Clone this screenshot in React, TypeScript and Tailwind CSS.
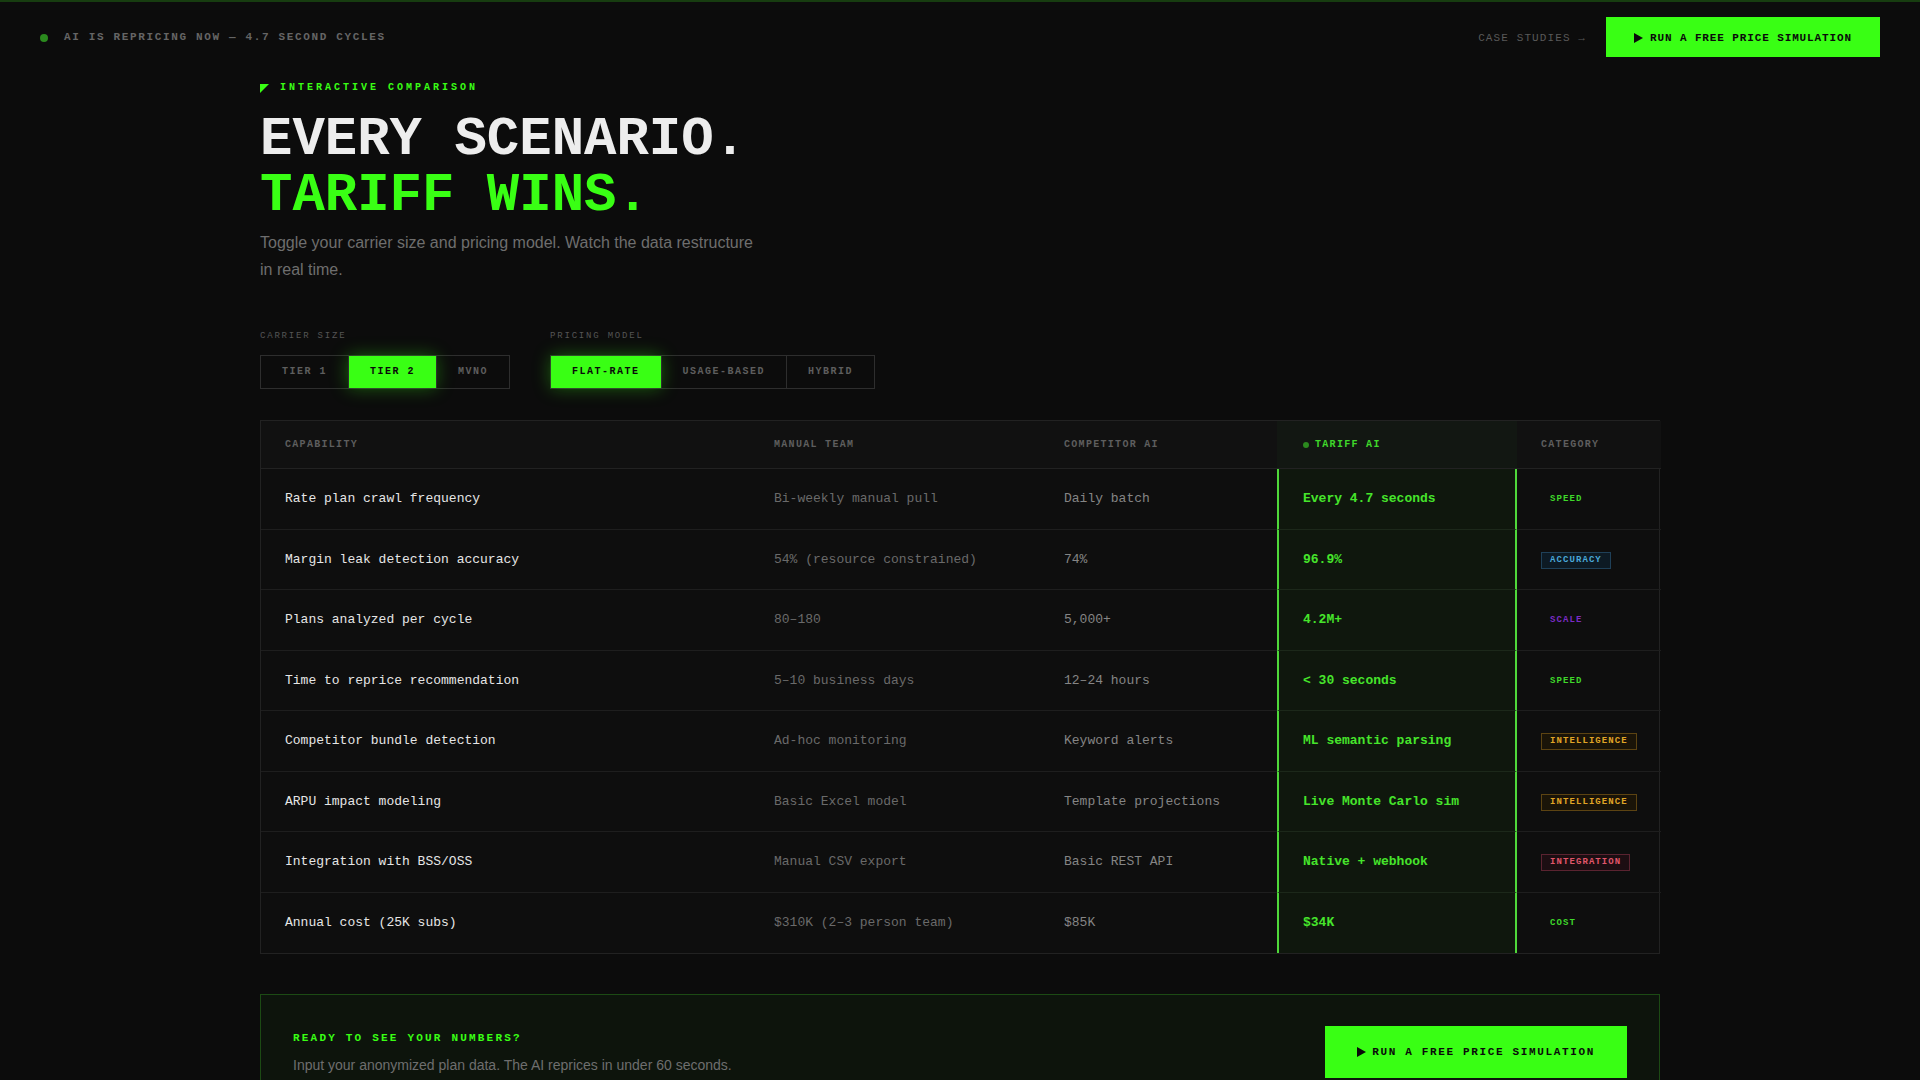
import { useState } from 'react';

type Badge = 'speed' | 'accuracy' | 'scale' | 'intelligence' | 'integration' | 'cost';

const ROWS: { cap: string; manual: string; competitor: string; tariff: string; badge: Badge }[] = [
  { cap: 'Rate plan crawl frequency', manual: 'Bi-weekly manual pull', competitor: 'Daily batch', tariff: 'Every 4.7 seconds', badge: 'speed' },
  { cap: 'Margin leak detection accuracy', manual: '54% (resource constrained)', competitor: '74%', tariff: '96.9%', badge: 'accuracy' },
  { cap: 'Plans analyzed per cycle', manual: '80–180', competitor: '5,000+', tariff: '4.2M+', badge: 'scale' },
  { cap: 'Time to reprice recommendation', manual: '5–10 business days', competitor: '12–24 hours', tariff: '< 30 seconds', badge: 'speed' },
  { cap: 'Competitor bundle detection', manual: 'Ad-hoc monitoring', competitor: 'Keyword alerts', tariff: 'ML semantic parsing', badge: 'intelligence' },
  { cap: 'ARPU impact modeling', manual: 'Basic Excel model', competitor: 'Template projections', tariff: 'Live Monte Carlo sim', badge: 'intelligence' },
  { cap: 'Integration with BSS/OSS', manual: 'Manual CSV export', competitor: 'Basic REST API', tariff: 'Native + webhook', badge: 'integration' },
  { cap: 'Annual cost (25K subs)', manual: '$310K (2–3 person team)', competitor: '$85K', tariff: '$34K', badge: 'cost' },
];

const BADGE_STYLES: Record<Badge, string> = {
  speed: 'text-[#3fd82a] border-transparent',
  accuracy: 'text-[#4aa8d8] border-[#1f4058] bg-[#0d1a24]',
  scale: 'text-[#7a2bc4] border-transparent',
  intelligence: 'text-[#e0a526] border-[#5c4312] bg-[#1a1408]',
  integration: 'text-[#e0566a] border-[#5a2330] bg-[#1c0e12]',
  cost: 'text-[#3fd82a] border-transparent',
};

// play arrow used on the simulation buttons
function Play() {
  return (
    <svg width="9" height="10" viewBox="0 0 9 10" className="shrink-0">
      <polygon points="0,0 9,5 0,10" fill="currentColor" />
    </svg>
  );
}

function Toggle({ label, options, value, onChange }: { label: string; options: string[]; value: string; onChange: (v: string) => void }) {
  return (
    <div>
      <div className="mb-3 text-[9px] leading-[14px] tracking-[0.2em] text-[#555]">{label}</div>
      <div className="flex border border-[#2e2e2e]">
        {options.map((opt, i) => {
          const active = opt === value;
          return (
            <button
              key={opt}
              onClick={() => onChange(opt)}
              className={
                'px-[21px] py-[9px] text-[10px] leading-[14px] font-bold tracking-[0.15em] ' +
                (i > 0 ? 'border-l border-[#2e2e2e] ' : '') +
                (active ? 'bg-[#39ff14] text-[#0a0a0a] shadow-[0_0_18px_rgba(57,255,20,0.35)]' : 'text-[#5e5e5e]')
              }
            >
              {opt}
            </button>
          );
        })}
      </div>
    </div>
  );
}

export default function App() {
  const [tier, setTier] = useState('TIER 2');
  const [model, setModel] = useState('FLAT-RATE');

  return (
    <div className="min-h-screen bg-[#0c0c0c] font-['Liberation_Mono','DejaVu_Sans_Mono',monospace]">
      {/* status bar */}
      <header className="flex h-[58px] items-start justify-between border-t-2 border-[#173d10] px-10 pt-[15px]">
        <div className="flex h-[41px] items-center gap-[16px]">
          <span className="h-[8px] w-[8px] rounded-full bg-[#2b8a1e]" />
          <span className="text-[11px] font-bold tracking-[0.15em] text-[#656565]">AI IS REPRICING NOW — 4.7 SECOND CYCLES</span>
        </div>
        <div className="flex items-center gap-5">
          <span className="mt-[2px] text-[11px] tracking-[0.1em] text-[#595959]">CASE STUDIES →</span>
          <button className="flex h-[40px] items-center gap-[7px] bg-[#39ff14] px-7 pt-[2px] text-[11px] font-bold tracking-[0.08em] text-[#0a0a0a]">
            <Play />
            RUN A FREE PRICE SIMULATION
          </button>
        </div>
      </header>

      <main className="mx-auto w-[1400px]">
        <div className="mt-[23px] flex items-center gap-[11px]">
          <svg width="9" height="9" viewBox="0 0 9 9">
            <polygon points="0,0 9,0 0,9" fill="#39ff14" />
          </svg>
          <span className="text-[10px] leading-[14px] font-bold tracking-[0.3em] text-[#39ff14]">INTERACTIVE COMPARISON</span>
        </div>

        <h1 className="mt-[17px] text-[54px] leading-[56px] font-bold">
          <span className="block text-[#ededed]">EVERY SCENARIO.</span>
          <span className="block text-[#39ff14]">TARIFF WINS.</span>
        </h1>

        <p className="mt-[6px] max-w-[500px] font-['Liberation_Sans',Arial,sans-serif] text-[16px] leading-[26.5px] text-[#6e6e6e]">
          Toggle your carrier size and pricing model. Watch the data restructure in real time.
        </p>

        <div className="mt-[46px] flex gap-10">
          <Toggle label="CARRIER SIZE" options={['TIER 1', 'TIER 2', 'MVNO']} value={tier} onChange={setTier} />
          <Toggle label="PRICING MODEL" options={['FLAT-RATE', 'USAGE-BASED', 'HYBRID']} value={model} onChange={setModel} />
        </div>

        {/* comparison table */}
        <div className="mt-[31px] grid grid-cols-[489px_290px_237px_240px_1fr] border border-[#222] bg-[#0e0e0e]">
          {['CAPABILITY', 'MANUAL TEAM', 'COMPETITOR AI'].map(h => (
            <div key={h} className="flex h-[48px] items-center border-b border-[#222] bg-[#111] px-6 text-[10px] font-bold tracking-[0.13em] text-[#5e5e5e]">
              {h}
            </div>
          ))}
          <div className="flex h-[48px] items-center gap-[6px] border-b border-[#222] bg-[#121712] pl-[26px] text-[10px] font-bold tracking-[0.13em] text-[#3fd82a]">
            <span className="h-[6px] w-[6px] rounded-full bg-[#2b8a1e]" />
            TARIFF AI
          </div>
          <div className="flex h-[48px] items-center border-b border-[#222] bg-[#111] px-6 text-[10px] font-bold tracking-[0.13em] text-[#5e5e5e]">
            CATEGORY
          </div>

          {ROWS.map((r, i) => {
            const last = i === ROWS.length - 1;
            const cell = 'flex h-[60.5px] items-center px-6 text-[13px] ' + (last ? '' : 'border-b border-[#1e1e1e] ');
            return (
              <div key={r.cap} className="contents">
                <div className={cell + 'text-[#e6e6e6]'}>{r.cap}</div>
                <div className={cell + 'text-[#6a6a6a]'}>{r.manual}</div>
                <div className={cell + 'text-[#858585]'}>{r.competitor}</div>
                <div className={'flex h-[60.5px] items-center border-x-2 border-x-[#4fd83a] bg-[#0f170d] px-6 text-[13px] font-bold text-[#46e52b] ' + (last ? '' : 'border-b border-b-[#1c281a]')}>
                  {r.tariff}
                </div>
                <div className={cell}>
                  <span className={'mt-[2px] border px-2 py-[3px] text-[9px] leading-[9px] font-bold tracking-[0.12em] ' + BADGE_STYLES[r.badge]}>
                    {r.badge.toUpperCase()}
                  </span>
                </div>
              </div>
            );
          })}
        </div>

        {/* call to action */}
        <div className="mt-10 flex items-center justify-between border border-[#1c4a14] bg-[#0d140c] px-8 pt-[31px] pb-8">
          <div>
            <div className="text-[11px] leading-4 font-bold tracking-[0.2em] text-[#39ff14]">READY TO SEE YOUR NUMBERS?</div>
            <div className="mt-[9px] font-['Liberation_Sans',Arial,sans-serif] text-[14px] leading-5 text-[#6e6e6e]">
              Input your anonymized plan data. The AI reprices in under 60 seconds.
            </div>
          </div>
          <button className="flex h-[52px] items-center gap-[6px] bg-[#39ff14] px-8 text-[11px] font-bold tracking-[0.15em] text-[#0a0a0a]">
            <Play />
            RUN A FREE PRICE SIMULATION
          </button>
        </div>
      </main>
    </div>
  );
}
